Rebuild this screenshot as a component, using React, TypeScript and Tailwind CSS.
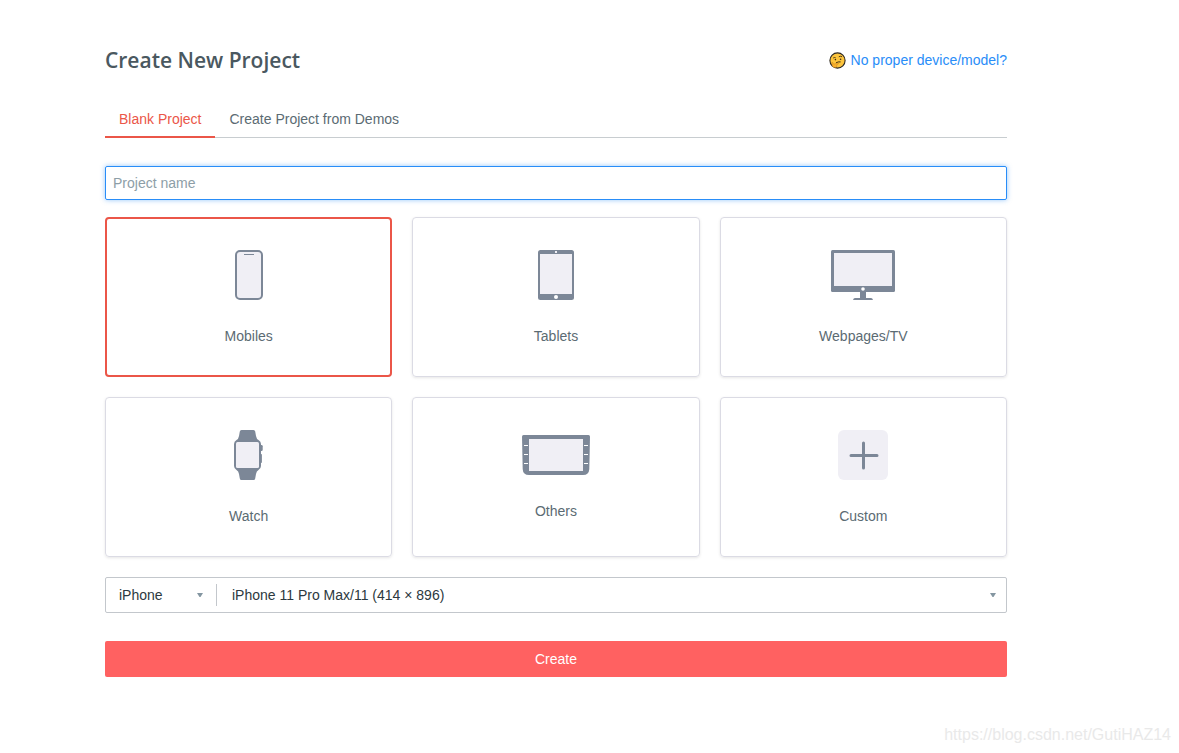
import { useState } from 'react';
import type { ReactNode } from 'react';

type Device = {
  id: string;
  label: string;
  icon: ReactNode;
};

const devices: Device[] = [
  {
    id: 'mobiles',
    label: 'Mobiles',
    icon: (
      <svg width="28" height="50" viewBox="0 0 28 50" aria-hidden="true">
        <rect x="1" y="1" width="26" height="48" rx="4" fill="#f0eff5" stroke="#7c8797" strokeWidth="2" />
        <path d="M9 4.5h10" stroke="#7c8797" />
      </svg>
    ),
  },
  {
    id: 'tablets',
    label: 'Tablets',
    icon: (
      <svg width="36" height="50" viewBox="0 0 36 50" aria-hidden="true">
        <rect width="36" height="50" rx="2.5" fill="#7c8797" />
        <rect x="2" y="4" width="32" height="40" fill="#f0eff5" />
        <rect x="17" y="1" width="2" height="2" fill="#f0eff5" />
        <circle cx="18" cy="47" r="2" fill="#fff" />
      </svg>
    ),
  },
  {
    id: 'web',
    label: 'Webpages/TV',
    icon: (
      <svg width="64" height="50" viewBox="0 0 64 50" aria-hidden="true">
        <rect width="64" height="42" rx="1.5" fill="#7c8797" />
        <rect x="3" y="3" width="58" height="33" fill="#f0eff5" />
        <circle cx="32" cy="39" r="1.8" fill="#fff" />
        <path d="M29 42h6v6h5q1.500 0 2 2H22q.5-2 2-2h5z" fill="#7c8797" />
      </svg>
    ),
  },
  {
    id: 'watch',
    label: 'Watch',
    icon: (
      <svg width="29" height="50" viewBox="0 0 29 50" aria-hidden="true">
        <path
          d="M7.500 0h12q1.500 0 1.700 1.500L22 6q.5 3 2.500 4Q27 11.500 27 14v22q0 2.500-2.500 4-2 1-2.500 4l-.8 4.500Q21 50 19.500 50h-12Q6 50 5.800 48.500L5 44q-.5-3-2.500-4Q0 38.500 0 36V14q0-2.500 2.500-4 2-1 2.500-4l.8-4.500Q6 0 7.500 0z"
          fill="#7c8797"
        />
        <rect x="2" y="12" width="23" height="26" rx="1.5" fill="#f0eff5" />
        <rect x="26" y="15" width="2.700" height="6" rx="1.2" fill="#7c8797" />
        <rect x="26" y="24" width="1.900" height="9" rx=".8" fill="#7c8797" />
      </svg>
    ),
  },
  {
    id: 'others',
    label: 'Others',
    icon: (
      <svg width="68" height="40" viewBox="0 0 68 40" aria-hidden="true">
        <path d="M1.500 0h65Q68 0 68 1.500L67.300 34q-.3 6-6.300 6H7q-6 0-6.300-6L0 1.500Q0 0 1.500 0z" fill="#7c8797" />
        <rect x="7" y="4" width="54" height="32" fill="#f0eff5" />
        <path d="M2 10.500h4M2 19.500h4M2 28.500h4M62 10.500h4M62 19.500h4M62 28.500h4" stroke="#fff" />
      </svg>
    ),
  },
  {
    id: 'custom',
    label: 'Custom',
    icon: (
      <svg width="50" height="50" viewBox="0 0 50 50" aria-hidden="true">
        <rect width="50" height="50" rx="6" fill="#f0eff5" />
        <path d="M25.500 13v25M13 25.500h26" stroke="#7c8797" strokeWidth="3" strokeLinecap="round" />
      </svg>
    ),
  },
];

const tabs = ['Blank Project', 'Create Project from Demos'];

const ThinkingFace = () => (
  <svg width="17" height="17" viewBox="0 0 17 17" aria-hidden="true">
    <circle cx="8.500" cy="8.500" r="7.600" fill="#fcc43c" stroke="#2b2620" strokeWidth="1.100" />
    <path d="M4.200 6q1.200-.8 2.400-.3M9.800 4.800q1.600-1 3.200-.1" fill="none" stroke="#3d2c12" strokeWidth=".9" />
    <circle cx="6.400" cy="7.600" r=".8" fill="#3d2c12" />
    <circle cx="11.600" cy="7.200" r=".8" fill="#3d2c12" />
    <path d="M7 10.800q2.400-1.300 4.600-.9" fill="none" stroke="#3d2c12" strokeWidth="1" />
    <path d="M2.700 10.600q1-.8 1.500.6l.5 1 4-1.200q1.300 0 .7 1l-1.600.7q.5 2.200-1.200 2.800-2 .4-3.300-1.500z" fill="#f9ae2b" stroke="#b97a1a" strokeWidth=".4" />
  </svg>
);

const Caret = ({ className }: { className: string }) => (
  <svg
    className={`pointer-events-none absolute top-1/2 -translate-y-1/2 ${className}`}
    width="6"
    height="4"
    viewBox="0 0 6 4"
    aria-hidden="true"
  >
    <path d="M0 0h6L3.500 4h-1z" fill="#8496a1" />
  </svg>
);

export default function App() {
  const [tab, setTab] = useState<string>(tabs[0]);
  const [device, setDevice] = useState<string>('mobiles');
  const [name, setName] = useState<string>('');

  return (
    <div className="flex min-h-screen flex-col bg-white font-['Liberation_Sans',Arial,sans-serif] text-sm text-[#5b6b73]">
      <main className="grow pt-11 pr-[172px] pl-[105px]">
        <header className="flex h-8 items-center justify-between">
          <h1 className="font-['Open_Sans','Noto_Sans',sans-serif] text-[21px] font-semibold text-[#4a5860]">
            Create New Project
          </h1>
          <a href="#feedback" className="flex items-center gap-[5px] text-[#298df8]">
            <ThinkingFace />
            No proper device/model?
          </a>
        </header>

        <div role="tablist" className="mt-6 flex h-[38px] border-b border-[#c8cdd0]">
          {tabs.map((item) => (
            <button
              key={item}
              type="button"
              role="tab"
              aria-selected={tab === item}
              onClick={() => setTab(item)}
              className={`-mb-px border-b-2 px-3.5 pt-0.5 ${
                tab === item ? 'border-[#eb5648] text-[#eb5648]' : 'border-transparent'
              }`}
            >
              {item}
            </button>
          ))}
        </div>

        <form onSubmit={(e) => e.preventDefault()}>
          <input
            type="text"
            aria-label="Project name"
            placeholder="Project name"
            value={name}
            onChange={(e) => setName(e.target.value)}
            className="mt-7 block h-[34px] w-full rounded-xs border border-[#298df8] px-[7px] shadow-[0_0_5px_rgba(41,141,248,0.5)] outline-none placeholder:text-[#8d9ea7]"
          />

          <div className="mt-[17px] grid grid-cols-3 gap-5">
            {devices.map((item) => (
              <button
                key={item.id}
                type="button"
                aria-pressed={device === item.id}
                onClick={() => setDevice(item.id)}
                className={`flex h-40 flex-col items-center justify-center gap-7 rounded-sm leading-4 ${
                  device === item.id
                    ? 'border-2 border-[#eb5648]'
                    : 'border border-[#dbdbe4] shadow-[0_1px_3px_rgba(0,0,0,0.1)]'
                }`}
              >
                {item.icon}
                <span>{item.label}</span>
              </button>
            ))}
          </div>

          <div className="mt-5 flex h-9 items-center rounded-xs border border-[#c3c7cc] text-[#2c3940]">
            <div className="relative w-[111px] border-r border-[#c3c7cc]">
              <select
                aria-label="Device family"
                className="block h-[22px] w-full appearance-none bg-transparent pl-[13px] outline-none"
              >
                <option>iPhone</option>
              </select>
              <Caret className="right-[13px]" />
            </div>
            <div className="relative grow">
              <select
                aria-label="Device model"
                className="block h-[22px] w-full appearance-none bg-transparent pl-[15px] outline-none"
              >
                <option>iPhone 11 Pro Max/11 (414 × 896)</option>
              </select>
              <Caret className="right-2.5" />
            </div>
          </div>

          <button type="submit" className="mt-7 h-9 w-full rounded-xs bg-[#ff6161] text-white">
            Create
          </button>
        </form>
      </main>

      <footer className="pr-2 pb-1.5 text-right text-base text-[#e9e9e9]">
        https://blog.csdn.net/GutiHAZ14
      </footer>
    </div>
  );
}
